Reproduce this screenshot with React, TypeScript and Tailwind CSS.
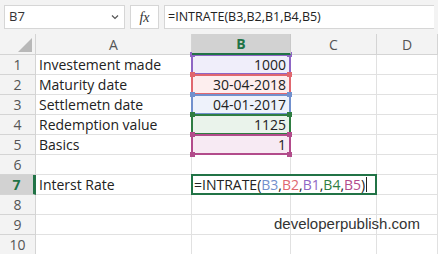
const font = { fontFamily: '"Open Sans", "Noto Sans", sans-serif' };

type Ref = { label: string; value: string; color: string; fill: string };

const refs: Ref[] = [
  { label: "Investement made", value: "1000", color: "#8e66c4", fill: "#f0eefa" },
  { label: "Maturity date", value: "30-04-2018", color: "#e0676f", fill: "#fdeeee" },
  { label: "Settlemetn date", value: "04-01-2017", color: "#7190cd", fill: "#eef2fb" },
  { label: "Redemption value", value: "1125", color: "#2f7d42", fill: "#eaf3eb" },
  { label: "Basics", value: "1", color: "#b24b8b", fill: "#f7eaf3" },
];

const cols = ["A", "B", "C", "D"];

function RowHead({ n, active }: { n: number; active?: boolean }) {
  return (
    <div
      className={
        active
          ? "flex items-center justify-center border-b border-r-[3px] border-b-[#d4d4d4] border-r-[#217346] bg-[#d2d2d2] text-[14px] font-bold text-[#217346]"
          : "flex items-center justify-center border-b border-r border-[#d4d4d4] bg-[#f3f3f3] text-[14px] text-[#555]"
      }
    >
      {n}
    </div>
  );
}

function Cell({ children, className = "" }: { children?: React.ReactNode; className?: string }) {
  return (
    <div className={"flex items-center overflow-visible whitespace-nowrap border-b border-r border-[#e1e1e1] px-[3px] text-[14px] text-[#222] " + className}>
      {children}
    </div>
  );
}

function Handle({ color, pos }: { color: string; pos: string }) {
  return <div className={"absolute h-[5px] w-[5px] " + pos} style={{ backgroundColor: color }} />;
}

function RefCell({ r, z }: { r: Ref; z: number }) {
  return (
    <div
      className="relative flex items-center justify-end border-b border-r border-[#e1e1e1] pr-[4px] text-[14px] text-[#222]"
      style={{ backgroundColor: r.fill, zIndex: z }}
    >
      <div className="absolute -left-[1px] -top-[1px] h-[21px] w-[100px] border-2" style={{ borderColor: r.color }} />
      <Handle color={r.color} pos="-left-[2px] -top-[3px]" />
      <Handle color={r.color} pos="-right-[2px] -top-[3px]" />
      <Handle color={r.color} pos="-left-[2px] -bottom-[3px]" />
      <Handle color={r.color} pos="-right-[2px] -bottom-[3px]" />
      <span className="relative">{r.value}</span>
    </div>
  );
}

export default function App() {
  return (
    <div className="relative h-[254px] w-[438px] overflow-hidden bg-white" style={font}>
      {/* formula bar */}
      <div className="flex h-[34px] items-start gap-[5px] bg-[#f3f3f3] px-[4px] pt-[5px]">
        <div className="flex h-[24px] w-[121px] items-center justify-between border border-[#d6d6d6] bg-white pl-[4px] pr-[5px] text-[13px] text-[#333]">
          <span>B7</span>
          <svg width="8" height="6" viewBox="0 0 8 6" fill="none" stroke="#555" strokeWidth="1.2">
            <path d="M1 1.5 L4 4.5 L7 1.5" />
          </svg>
        </div>
        <div className="flex h-[24px] w-[29px] items-center justify-center border border-[#d6d6d6] bg-white text-[14px] italic text-[#333]" style={{ fontFamily: '"Liberation Serif", serif' }}>
          fx
        </div>
        <div className="flex h-[24px] flex-1 items-center border border-r-0 border-[#d6d6d6] bg-white pl-[3px] text-[12.5px] text-[#222]">
          =INTRATE(B3,B2,B1,B4,B5)
        </div>
      </div>

      {/* sheet */}
      <div className="grid grid-cols-[36px_156px_99px_86px_1fr] grid-rows-[21px_repeat(10,20px)]">
        <div className="relative border-b border-r border-[#d4d4d4] bg-[#f3f3f3]">
          <div className="absolute bottom-[2px] right-[3px] h-0 w-0 border-b-[14px] border-l-[14px] border-b-[#b8b8b8] border-l-transparent" />
        </div>
        {cols.map((c) =>
          c === "B" ? (
            <div key={c} className="relative z-30 flex items-center justify-center border-b-[2px] border-r border-b-[#217346] border-r-[#c8c8c8] bg-[#d2d2d2] text-[14px] font-bold text-[#217346]">
              {c}
            </div>
          ) : (
            <div key={c} className="flex items-center justify-center border-b border-r border-[#d4d4d4] bg-[#f3f3f3] text-[14px] text-[#555]">
              {c}
            </div>
          ),
        )}

        {refs.map((r, i) => (
          <div key={r.label} className="contents">
            <RowHead n={i + 1} />
            <Cell>{r.label}</Cell>
            <RefCell r={r} z={i + 1} />
            <Cell />
            <Cell />
          </div>
        ))}

        <RowHead n={6} />
        <Cell />
        <Cell />
        <Cell />
        <Cell />

        <RowHead n={7} active />
        <Cell>Interst Rate</Cell>
        <div className="relative z-20 col-span-2 -ml-[1px] -mt-[1px] flex h-[21px] items-center whitespace-nowrap border-2 border-[#217346] bg-white pl-[1px] text-[14px] text-[#222]">
          <span>=INTRATE(</span>
          <span className="text-[#7190cd]">B3</span>,
          <span className="text-[#e0676f]">B2</span>,
          <span className="text-[#8e66c4]">B1</span>,
          <span className="text-[#2f7d42]">B4</span>,
          <span className="text-[#b24b8b]">B5</span>
          <span>)</span>
          <span className="ml-[1px] h-[15px] w-px bg-[#222]" />
        </div>
        <Cell />

        {[8, 9, 10].map((n) => (
          <div key={n} className="contents">
            <RowHead n={n} />
            <Cell />
            <Cell />
            <Cell />
            <Cell />
          </div>
        ))}
      </div>

      <div className="pointer-events-none absolute left-[274px] top-[213px] text-[15px] text-[#333]" style={{ fontFamily: '"Liberation Sans", Arial, sans-serif' }}>
        developerpublish.com
      </div>
    </div>
  );
}
